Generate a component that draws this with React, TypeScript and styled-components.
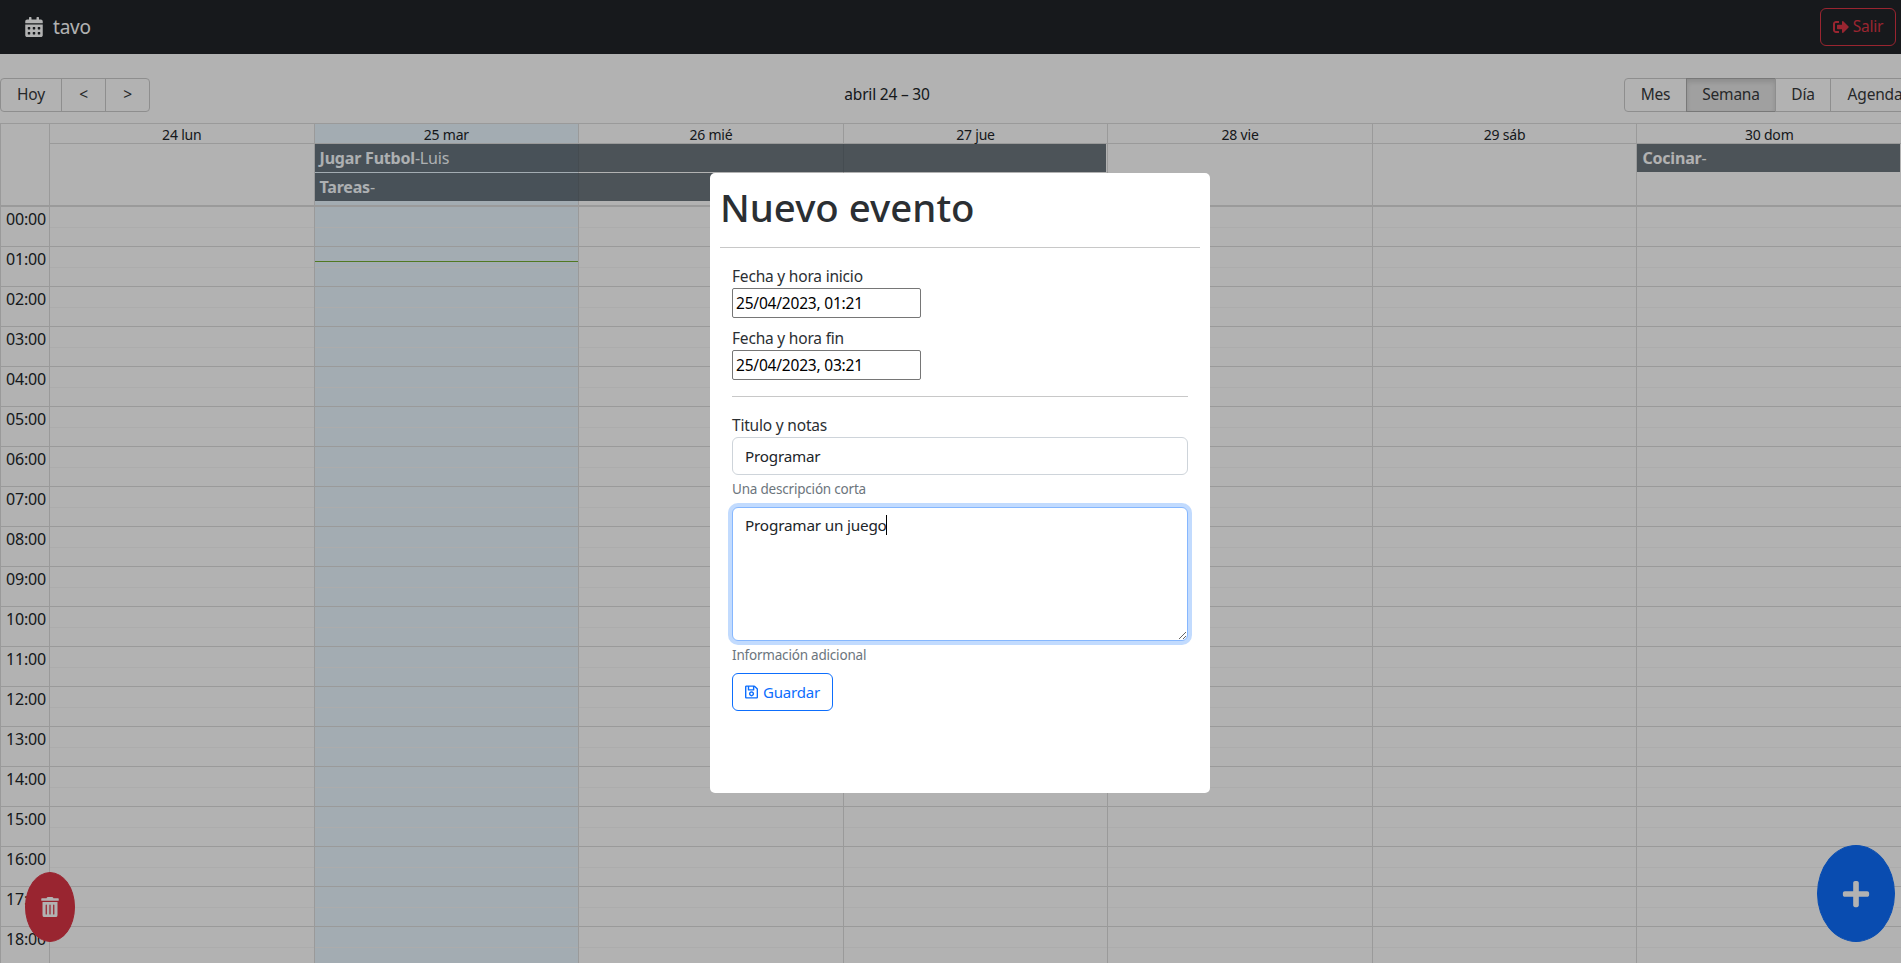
import React from "react";
import styled, { createGlobalStyle } from "styled-components";
import { FaCalendarAlt, FaPlus, FaRegSave, FaSignOutAlt, FaTrashAlt } from "react-icons/fa";

const GlobalStyle = createGlobalStyle`
  html, body {
    margin: 0;
    height: 100%;
    overflow: hidden;
    background: #fff;
  }
  body {
    font-family: "Noto Sans", "Open Sans", "Liberation Sans", sans-serif;
    font-size: 16px;
    line-height: 1.5;
    color: #212529;
    letter-spacing: -0.2px;
  }
  * {
    box-sizing: border-box;
  }
`;

const days = [
  { label: "24 lun" },
  { label: "25 mar", today: true },
  { label: "26 mié" },
  { label: "27 jue" },
  { label: "28 vie" },
  { label: "29 sáb" },
  { label: "30 dom" },
];

const allDayEvents = [
  { title: "Jugar Futbol", user: "Luis", start: 2, span: 3, row: 1 },
  { title: "Tareas", user: "", start: 2, span: 2, row: 2 },
  { title: "Cocinar", user: "", start: 7, span: 1, row: 1 },
];

const hours = Array.from({ length: 24 }, (_, i) => `${String(i).padStart(2, "0")}:00`);

const Page = styled.div`
  height: 100vh;
  overflow: hidden;
`;

const Navbar = styled.nav`
  height: 54px;
  background: #212529;
  display: flex;
  align-items: center;
  justify-content: space-between;
  padding: 0 5px 0 24px;
  margin-bottom: 24px;
`;

const Brand = styled.span`
  display: flex;
  align-items: center;
  gap: 9px;
  color: #fff;
  font-size: 19px;
`;

const LogoutButton = styled.button`
  display: flex;
  align-items: center;
  gap: 4px;
  height: 38px;
  width: 76px;
  justify-content: center;
  background: transparent;
  border: 1px solid #dc3545;
  border-radius: 6px;
  color: #dc3545;
  font: inherit;
  font-size: 15.5px;
  letter-spacing: inherit;
`;

const Toolbar = styled.div`
  display: flex;
  align-items: center;
  width: 1920px;
  margin-bottom: 11px;
`;

const ButtonGroup = styled.div`
  display: inline-flex;
`;

const ToolButton = styled.button<{ $active?: boolean; $width: number }>`
  width: ${(p) => p.$width}px;
  height: 34px;
  padding: 0;
  margin-left: -1px;
  background: ${(p) => (p.$active ? "#e6e6e6" : "transparent")};
  box-shadow: ${(p) => (p.$active ? "inset 0 3px 5px rgba(0, 0, 0, 0.125)" : "none")};
  border: 1px solid #ccc;
  border-color: ${(p) => (p.$active ? "#adadad" : "#ccc")};
  color: #373a3c;
  font: inherit;
  font-size: 15.5px;
  letter-spacing: inherit;
  line-height: 1;

  &:first-child {
    margin-left: 0;
    border-radius: 4px 0 0 4px;
  }
  &:last-child {
    border-radius: 0 4px 4px 0;
  }
`;

const ToolbarLabel = styled.span`
  flex: 1;
  text-align: center;
  padding: 0 10px;
  font-size: 15.5px;
`;

const Calendar = styled.div`
  border-top: 1px solid #ddd;
  border-left: 1px solid #ddd;
`;

const HeaderGrid = styled.div`
  display: grid;
  grid-template-columns: 48px 1fr;
`;

const HeaderGutter = styled.div`
  border-bottom: 0;
`;

const HeaderDays = styled.div`
  display: grid;
  grid-template-columns: repeat(7, 1fr);
`;

const DayHeader = styled.div<{ $today?: boolean }>`
  height: 20px;
  border-left: 1px solid #ddd;
  border-bottom: 1px solid #ddd;
  background: ${(p) => (p.$today ? "#eaf6ff" : "transparent")};
  font-size: 14px;
  line-height: 21px;
  text-align: center;
`;

const AllDayGrid = styled.div`
  display: grid;
  grid-template-columns: repeat(7, 1fr);
  grid-template-rows: 28px 28px 3px;
  row-gap: 1px;
  grid-column: 1 / -1;
`;

const AllDayCell = styled.div<{ $col: number; $today?: boolean }>`
  grid-row: 1 / -1;
  grid-column: ${(p) => p.$col};
  border-left: 1px solid #ddd;
  background: ${(p) => (p.$today ? "#eaf6ff" : "transparent")};
`;

const AllDayEvent = styled.div<{ $start: number; $span: number; $row: number }>`
  grid-column: ${(p) => p.$start} / span ${(p) => p.$span};
  grid-row: ${(p) => p.$row};
  z-index: 1;
  margin: 0 1px;
  padding: 2px 5px;
  background: #303e48;
  opacity: 0.7;
  color: #fff;
  line-height: 24px;
  white-space: nowrap;
  overflow: hidden;
`;

const EventTitle = styled.strong`
  font-weight: 700;
`;

const TimeBody = styled.div`
  display: grid;
  grid-template-columns: 48px repeat(7, 1fr);
  border-top: 2px solid #ddd;
`;

const Gutter = styled.div``;

const GutterSlot = styled.div`
  height: 40px;
  border-bottom: 1px solid #ddd;
  padding-left: 5px;
  line-height: 24px;
`;

const DayColumn = styled.div<{ $today?: boolean }>`
  position: relative;
  border-left: 1px solid #ddd;
  background: ${(p) => (p.$today ? "#eaf6ff" : "transparent")};
`;

const HourSlot = styled.div`
  height: 40px;
  border-bottom: 1px solid #ddd;
  background: linear-gradient(#f7f7f7, #f7f7f7) 0 20px / 100% 1px no-repeat;
`;

const NowLine = styled.div`
  position: absolute;
  left: 0;
  right: 0;
  top: 54px;
  height: 1px;
  background: #74ad31;
`;

const Fab = styled.button<{ $side: "left" | "right"; $tone: string }>`
  position: fixed;
  bottom: 21px;
  ${(p) => (p.$side === "left" ? "left: 25px;" : "right: 6px;")}
  display: flex;
  align-items: center;
  justify-content: center;
  width: ${(p) => (p.$side === "left" ? "50px" : "78px")};
  height: ${(p) => (p.$side === "left" ? "70px" : "97px")};
  padding: 0;
  border: 1px solid ${(p) => p.$tone};
  border-radius: 100%;
  background: ${(p) => p.$tone};
  color: #fff;
  font-size: ${(p) => (p.$side === "left" ? "20px" : "30px")};
`;

const Overlay = styled.div`
  position: fixed;
  inset: 0;
  z-index: 10;
  background: rgba(0, 0, 0, 0.3);
`;

const Modal = styled.div`
  position: absolute;
  left: 710px;
  top: 173px;
  width: 500px;
  height: 620px;
  padding: 10px;
  background: #fff;
  border-radius: 5px;
  color: #2b2f33;
`;

const Title = styled.h1`
  margin: 0;
  padding-top: 1px;
  height: 48px;
  font-size: 38.4px;
  font-weight: 500;
  line-height: 47px;
  letter-spacing: 0;
`;

const Rule = styled.hr`
  height: 1px;
  margin: 16px 0;
  border: 0;
  background: #c8c8c8;
`;

const Form = styled.form`
  padding: 0 12px;
`;

const Group = styled.div`
  margin-bottom: 8px;
`;

const Label = styled.label`
  display: block;
  font-size: 15.5px;
  line-height: 24px;
`;

const DateInput = styled.input`
  display: block;
  width: 189px;
  height: 30px;
  padding: 0 3px;
  border: 1px solid #767676;
  border-radius: 2px;
  color: #000;
  font: inherit;
  font-size: 15.5px;
  letter-spacing: inherit;
`;

const TextInput = styled.input`
  display: block;
  width: 100%;
  height: 38px;
  padding: 6px 12px;
  border: 1px solid #ced4da;
  border-radius: 6px;
  color: #212529;
  font: inherit;
  font-size: 15.2px;
  letter-spacing: inherit;
`;

const NotesWrap = styled.div`
  position: relative;
`;

const Notes = styled.textarea`
  display: block;
  width: 100%;
  height: 134px;
  padding: 6px 12px;
  border: 1px solid #86b7fe;
  border-radius: 6px;
  box-shadow: 0 0 0 4px rgba(13, 110, 253, 0.25);
  outline: 0;
  caret-color: transparent;
  color: #212529;
  font: inherit;
  font-size: 15.3px;
  letter-spacing: inherit;
`;

const Caret = styled.span`
  position: absolute;
  left: 154px;
  top: 8px;
  width: 1px;
  height: 20px;
  background: #000;
`;

const Hint = styled.small`
  display: block;
  margin-top: 4px;
  color: #6c757d;
  font-size: 13.5px;
  line-height: 20px;
`;

const SaveButton = styled.button`
  display: flex;
  align-items: center;
  gap: 5px;
  height: 38px;
  width: 101px;
  padding: 0 12px;
  background: transparent;
  border: 1px solid #0d6efd;
  border-radius: 6px;
  color: #0d6efd;
  font: inherit;
  font-size: 15px;
  letter-spacing: inherit;
`;

const App: React.FC = () => {
  return (
    <Page>
      <GlobalStyle />
      <Navbar>
        <Brand>
          <FaCalendarAlt size={20} />
          tavo
        </Brand>
        <LogoutButton>
          <FaSignOutAlt size={16} />
          Salir
        </LogoutButton>
      </Navbar>

      <Toolbar>
        <ButtonGroup>
          <ToolButton $width={62}>Hoy</ToolButton>
          <ToolButton $width={45}>&lt;</ToolButton>
          <ToolButton $width={45}>&gt;</ToolButton>
        </ButtonGroup>
        <ToolbarLabel>abril 24 – 30</ToolbarLabel>
        <ButtonGroup>
          <ToolButton $width={63}>Mes</ToolButton>
          <ToolButton $width={90} $active>Semana</ToolButton>
          <ToolButton $width={56}>Día</ToolButton>
          <ToolButton $width={90}>Agenda</ToolButton>
        </ButtonGroup>
      </Toolbar>

      <Calendar>
        <HeaderGrid>
          <HeaderGutter />
          <HeaderDays>
            {days.map((d) => (
              <DayHeader key={d.label} $today={d.today}>
                {d.label}
              </DayHeader>
            ))}
            <AllDayGrid>
              {days.map((d, i) => (
                <AllDayCell key={d.label} $col={i + 1} $today={d.today} />
              ))}
              {allDayEvents.map((e) => (
                <AllDayEvent key={e.title} $start={e.start} $span={e.span} $row={e.row}>
                  <EventTitle>{e.title}</EventTitle>-{e.user}
                </AllDayEvent>
              ))}
            </AllDayGrid>
          </HeaderDays>
        </HeaderGrid>

        <TimeBody>
          <Gutter>
            {hours.map((h) => (
              <GutterSlot key={h}>{h}</GutterSlot>
            ))}
          </Gutter>
          {days.map((d) => (
            <DayColumn key={d.label} $today={d.today}>
              {hours.map((h) => (
                <HourSlot key={h} />
              ))}
              {d.today && <NowLine />}
            </DayColumn>
          ))}
        </TimeBody>
      </Calendar>

      <Fab $side="left" $tone="#dc3545">
        <FaTrashAlt />
      </Fab>
      <Fab $side="right" $tone="#0d6efd">
        <FaPlus />
      </Fab>

      <Overlay>
        <Modal>
          <Title>Nuevo evento</Title>
          <Rule />
          <Form>
            <Group>
              <Label>Fecha y hora inicio</Label>
              <DateInput readOnly value="25/04/2023, 01:21" />
            </Group>
            <Group>
              <Label>Fecha y hora fin</Label>
              <DateInput readOnly value="25/04/2023, 03:21" />
            </Group>
            <Rule />
            <Group>
              <Label>Titulo y notas</Label>
              <TextInput readOnly value="Programar" />
              <Hint>Una descripción corta</Hint>
            </Group>
            <Group>
              <NotesWrap>
                <Notes readOnly value="Programar un juego" />
                <Caret />
              </NotesWrap>
              <Hint>Información adicional</Hint>
            </Group>
            <SaveButton type="button">
              <FaRegSave size={16} />
              Guardar
            </SaveButton>
          </Form>
        </Modal>
      </Overlay>
    </Page>
  );
};

export default App;
